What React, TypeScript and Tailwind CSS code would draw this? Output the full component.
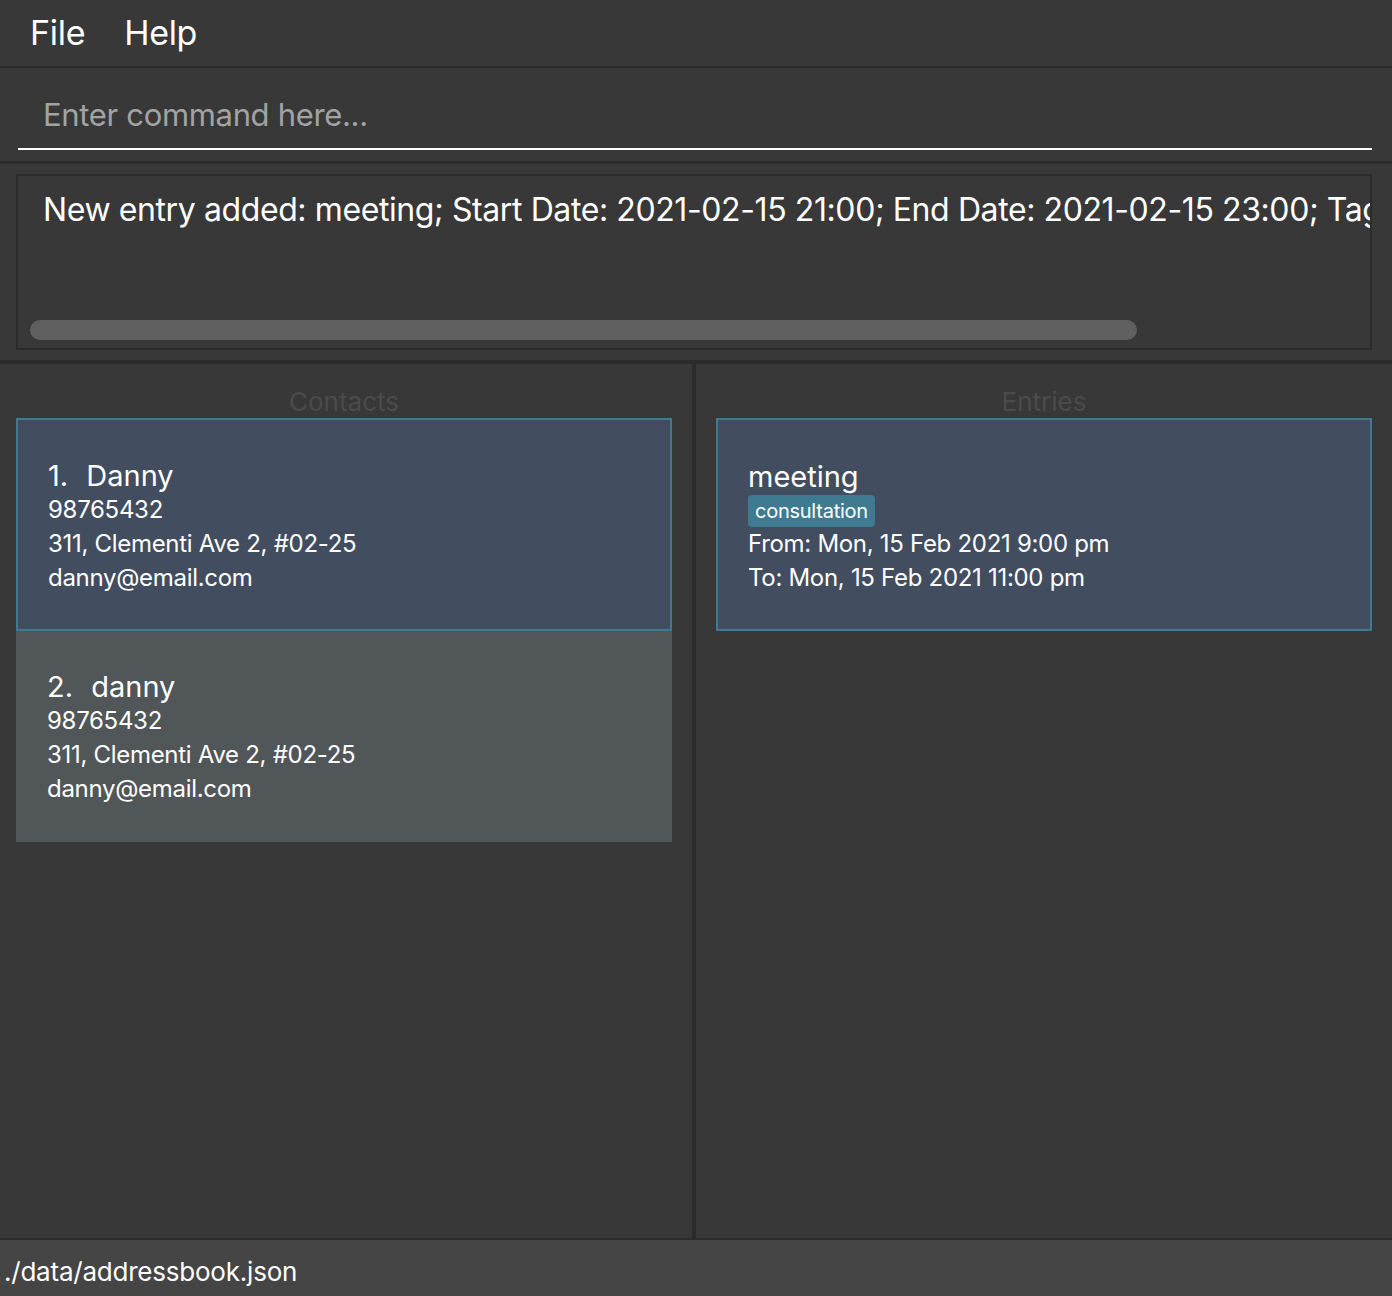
import React from 'react';

interface Contact {
  name: string;
  phone: string;
  address: string;
  email: string;
  selected?: boolean;
}

const contacts: Contact[] = [
  { name: 'Danny', phone: '98765432', address: '311, Clementi Ave 2, #02-25', email: 'danny@email.com', selected: true },
  { name: 'danny', phone: '98765432', address: '311, Clementi Ave 2, #02-25', email: 'danny@email.com' },
];

const small = 'text-[24px] leading-[34px] tracking-[-0.3px] text-white';

const ContactCard: React.FC<{ contact: Contact; index: number }> = ({ contact, index }) => (
  <div
    className={
      contact.selected
        ? 'bg-[#424d5f] border-2 border-[#3e7b91] pl-[30px] pt-[39px] pb-[34px]'
        : 'bg-[#515658] pl-[31px] pt-[39px] pb-[36px]'
    }
  >
    <div className="text-[29px] leading-[34px] text-white whitespace-pre">
      {index + 1}. <span className="ml-[10px]">{contact.name}</span>
    </div>
    <div className={small}>{contact.phone}</div>
    <div className={small}>{contact.address}</div>
    <div className={small}>{contact.email}</div>
  </div>
);

const App: React.FC = () => {
  return (
    <div
      className="w-[1392px] h-[1296px] flex flex-col bg-[#383838] overflow-hidden"
      style={{ fontFamily: 'Inter, "Noto Sans", sans-serif' }}
    >
      {/* menu bar */}
      <div className="h-[68px] shrink-0 flex items-center pl-[30px] gap-[39px] text-[34px] leading-[66px] tracking-[-0.3px] text-white border-b-2 border-[#2b2b2b]">
        <span>File</span>
        <span>Help</span>
      </div>

      {/* command box */}
      <div className="h-[96px] shrink-0 pl-[18px] pr-[20px] border-b-[3px] border-[#2b2b2b]">
        <div className="h-[82px] border-b-2 border-white pl-[25px] pt-[27px] text-[31px] leading-[40px] tracking-[-0.33px] text-[#a3a3a3]">
          Enter command here...
        </div>
      </div>

      {/* result display */}
      <div className="h-[200px] shrink-0 pl-[16px] pr-[20px] pt-[10px] border-b-4 border-[#2b2b2b]">
        <div className="h-[176px] border-2 border-[#2b2b2b] flex flex-col overflow-hidden">
          <div className="pl-[25px] pt-[14px] text-[32px] leading-[40px] tracking-[-0.4px] text-white whitespace-nowrap">
            New entry added: meeting; Start Date: 2021-02-15 21:00; End Date: 2021-02-15 23:00; Tags: [consultation]
          </div>
          <div className="mt-auto mb-[8px] ml-[12px] w-[1107px] h-[20px] shrink-0 rounded-[10px] bg-[#606060]" />
        </div>
      </div>

      {/* lists */}
      <div className="flex-1 flex min-h-0">
        <div className="w-[692px] pl-[16px] pr-[20px] pt-[22px]">
          <div className="text-center text-[26px] leading-[32px] text-[#4b4b4b]">Contacts</div>
          {contacts.map((c, i) => (
            <ContactCard key={i} contact={c} index={i} />
          ))}
        </div>
        <div className="w-[4px] bg-[#2b2b2b]" />
        <div className="flex-1 px-[20px] pt-[22px]">
          <div className="text-center text-[26px] leading-[32px] text-[#4b4b4b]">Entries</div>
          <div className="bg-[#424d5f] border-2 border-[#3e7b91] pl-[30px] pt-[40px] pb-[34px] text-white">
            <div className="text-[29px] leading-[34px]">meeting</div>
            <div className="mt-[1px] h-[32px] flex">
              <span className="bg-[#3e7b91] rounded-[4px] px-[7px] text-[20px] leading-[32px] tracking-[-0.25px]">consultation</span>
            </div>
            <div className={small}>From: Mon, 15 Feb 2021 9:00 pm</div>
            <div className={small}>To: Mon, 15 Feb 2021 11:00 pm</div>
          </div>
        </div>
      </div>

      {/* status bar */}
      <div className="h-[58px] shrink-0 bg-[#454545] border-t-2 border-[#2b2b2b] pl-[4px] pt-[7px] text-[26px] leading-[50px] tracking-[-0.22px] text-white">
        ./data/addressbook.json
      </div>
    </div>
  );
};

export default App;
